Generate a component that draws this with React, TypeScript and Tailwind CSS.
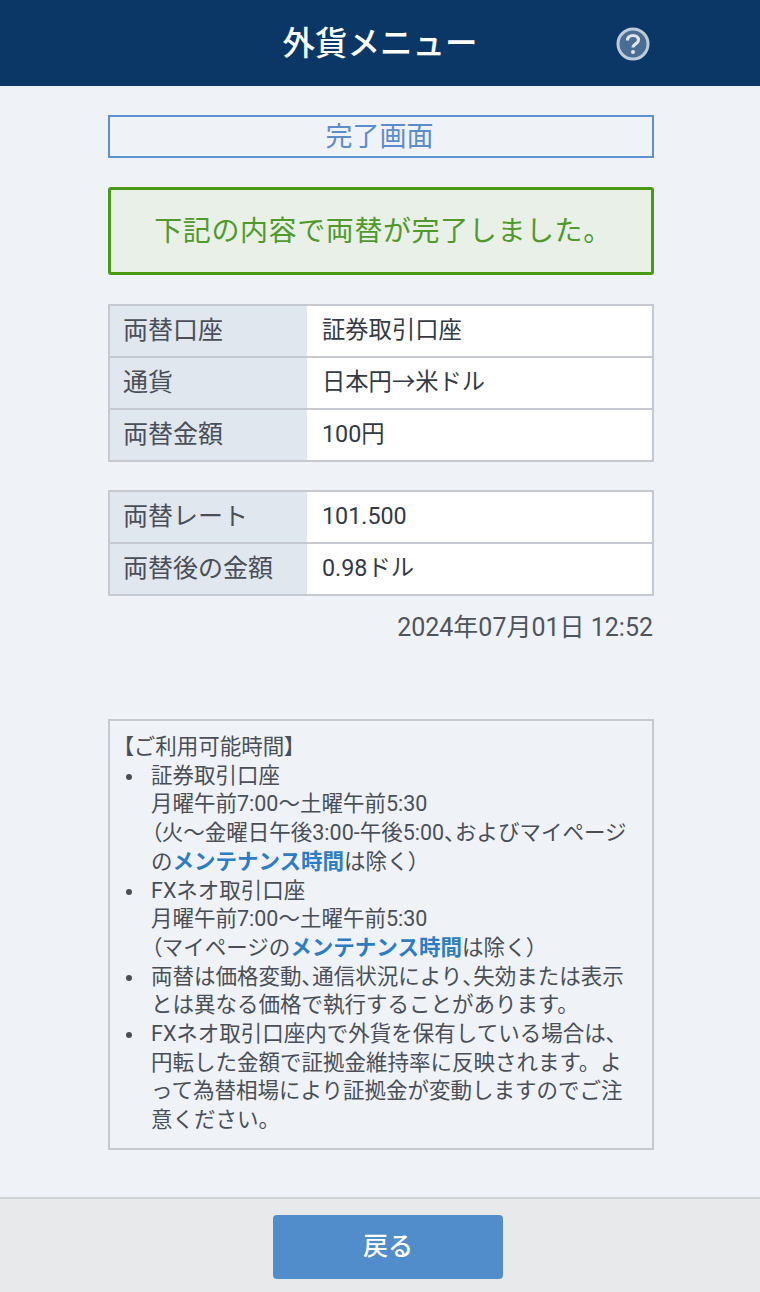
const font = "font-['Roboto','Noto_Sans_CJK_JP',sans-serif]";

function Row({ label, value, last }: { label: string; value: string; last?: boolean }) {
  return (
    <div className={last ? "flex h-[50px]" : "flex h-[52px] border-b-2 border-[#c6cad0]"}>
      <div className="w-[197px] flex items-center pl-[13px] pb-[1px] bg-[#e1e7ef] text-[25px] text-[#4a4f57]">{label}</div>
      <div className="flex-1 flex items-center pl-[15px] pb-[2px] bg-white text-[23.3px] text-[#333a44]">{value}</div>
    </div>
  );
}

function Link({ children }: { children: string }) {
  return <span className="inline-block font-bold text-[#2e7cc4]">{children}</span>;
}

// proportional punctuation, the notes set these narrow
function Narrow({ children }: { children: string }) {
  return <span className="inline-block [font-feature-settings:'palt']">{children}</span>;
}

function Note({ children }: { children: React.ReactNode }) {
  return (
    <li className="flex">
      <span className="w-[6px] h-[6px] mt-[12px] ml-[3px] mr-[19px] shrink-0 rounded-full bg-[#4a4f57]"></span>
      <div>{children}</div>
    </li>
  );
}

export default function App() {
  return (
    <div className={`${font} w-[760px] h-[1292px] flex flex-col bg-[#eff3f7]`}>
      {/* Header */}
      <header className="relative h-[86px] shrink-0 flex items-center justify-center bg-[#0a3766]">
        <h1 className="pt-[3px] text-[32.5px] font-medium text-white">外貨メニュー</h1>
        <svg className="absolute left-[616px] top-[27px]" width="34" height="34" viewBox="0 0 34 34" fill="none">
          <circle cx="17" cy="17" r="15" fill="#4a6d93" stroke="#bfcbd7" strokeWidth="3" />
          <path d="M11.5 13.5c0-3.2 2.4-5 5.5-5s5.5 1.8 5.5 4.6c0 3.8-5.5 3.8-5.5 7.4" stroke="#dfe5ec" strokeWidth="3.2" />
          <circle cx="17" cy="25" r="2" fill="#dfe5ec" />
        </svg>
      </header>

      {/* Content */}
      <main className="flex-1 pt-[29px] pl-[108px] pr-[106px]">
        <div className="h-[43px] flex items-center justify-center pr-[3px] pt-[1px] border-2 border-[#5b92cf] text-[27px] text-[#5b8ccb]">完了画面</div>

        <div className="mt-[29px] h-[88px] flex items-center justify-center pt-[2px] pl-[4px] rounded-[3px] border-[3px] border-[#4b9a16] bg-[#e9f0e8] text-[28px] text-[#4f9a2b] tracking-[0.6px]">
          下記の内容で両替が完了しました。
        </div>

        <div className="mt-[29px] border-2 border-[#c6cad0]">
          <Row label="両替口座" value="証券取引口座" />
          <Row label="通貨" value="日本円→米ドル" />
          <Row label="両替金額" value="100円" last />
        </div>

        <div className="mt-[28px] border-2 border-[#c6cad0]">
          <Row label="両替レート" value="101.500" />
          <Row label="両替後の金額" value="0.98ドル" last />
        </div>

        <p className="mt-[16px] pr-[1px] text-right text-[25px] leading-[32px] text-[#4f555d]">2024年07月01日 12:52</p>

        {/* Notes */}
        <div className="mt-[75px] h-[431px] border-2 border-[#c6cad0] pt-[12px] pl-[13px] pr-[22px] text-[21.5px] leading-[28.7px] text-[#4a4f57] [line-break:loose]">
          <p><Narrow>【</Narrow>ご利用可能時間<Narrow>】</Narrow></p>
          <ul>
            <Note>
              証券取引口座
              <br />
              月曜午前7:00～土曜午前5:30
              <br />
              <Narrow>（</Narrow>火～金曜日午後3:00-午後5:00<Narrow>、</Narrow>およびマイページの<Link>メンテナンス時間</Link>は除く<Narrow>）</Narrow>
            </Note>
            <Note>
              FXネオ取引口座
              <br />
              月曜午前7:00～土曜午前5:30
              <br />
              <Narrow>（</Narrow>マイページの<Link>メンテナンス時間</Link>は除く<Narrow>）</Narrow>
            </Note>
            <Note>
              両替は価格変動<Narrow>、</Narrow>通信状況により<Narrow>、</Narrow>失効または表示とは異なる価格で執行することがあります。
            </Note>
            <Note>
              FXネオ取引口座内で外貨を保有している場合は<Narrow>、</Narrow>円転した金額で証拠金維持率に反映されます。よって為替相場により証拠金が変動しますのでご注意ください。
            </Note>
          </ul>
        </div>
      </main>

      {/* Footer */}
      <footer className="h-[95px] shrink-0 border-t-2 border-[#d0d2d5] bg-[#e8e9eb] flex justify-center pt-[16px] pl-[16px]">
        <button className="w-[230px] h-[64px] rounded-[4px] bg-[#518dcb] text-[25px] font-medium text-white">戻る</button>
      </footer>
    </div>
  );
}
